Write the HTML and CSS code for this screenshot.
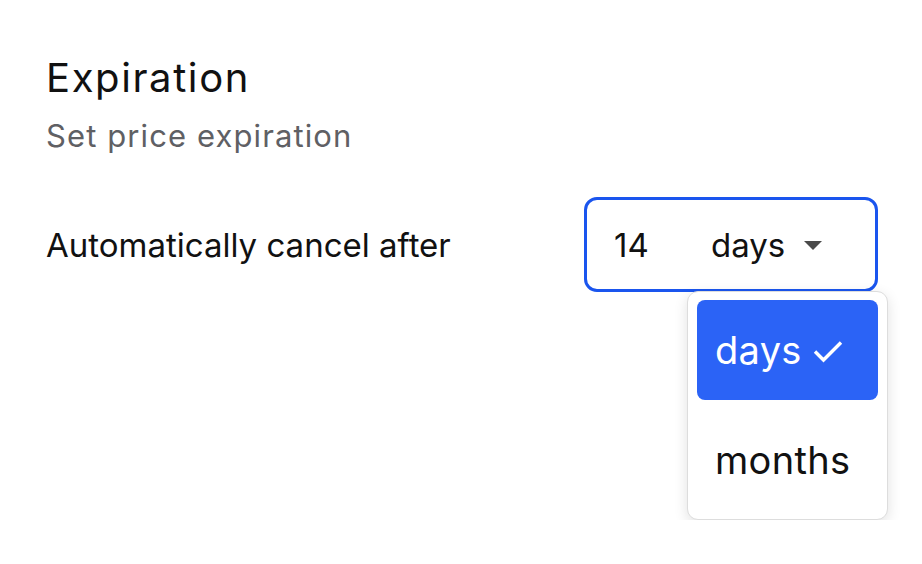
FILE: index.html
```html
<!DOCTYPE html>
<html lang="en">
<head>
    <meta charset="UTF-8">
    <title>Expiration</title>
    <link rel="stylesheet" href="styles.css">
</head>
<body>

<div class="panel">
    <h2 class="title">Expiration</h2>
    <p class="subtitle">Set price expiration</p>

    <div class="row">
        <span class="label">Automatically cancel after</span>
        <div class="field">
            <div class="select">
                <span class="amount">14</span>
                <span class="unit">days</span>
                <svg class="caret" width="18" height="9" viewBox="0 0 18 9"><path d="M0 0h18L9 9z" fill="#4a4a4a"/></svg>
            </div>
            <!-- open dropdown -->
            <ul class="menu">
                <li class="option selected">days
                    <svg class="check" width="32" height="24" viewBox="0 0 32 24"><path d="M3 12.5l8.5 8.5L29 3.5" fill="none" stroke="#fff" stroke-width="3.4"/></svg>
                </li>
                <li class="option">months</li>
            </ul>
        </div>
    </div>
</div>

</body>
</html>
```

FILE: styles.css
```css
body {
    margin: 0;
    background-color: #fff;
    font-family: Inter, "Open Sans", Arial, sans-serif;
    color: #111;
}
.panel {
    padding: 50px 0 0 46px;
}
.title {
    margin: 0;
    font-size: 40px;
    font-weight: 400;
    letter-spacing: 1.6px;
    line-height: 56px;
}
.subtitle {
    margin: 5px 0 0;
    font-size: 31px;
    letter-spacing: 1.1px;
    line-height: 50px;
    color: #5f6064;
}
.row {
    display: flex;
    align-items: flex-start;
    justify-content: space-between;
    width: 832px;
    margin-top: 36px;
}
.label {
    font-size: 33px;
    line-height: 96px;
}
.field {
    display: flex;
    flex-direction: column;
    align-items: flex-end;
}
.select {
    display: flex;
    align-items: center;
    width: 288px;
    height: 89px;
    border: 3px solid #1a55ee;
    border-radius: 13px;
    font-size: 33px;
}
.amount {
    margin-left: 27px;
    width: 97px;
}
.unit {
    width: 93px;
}
.caret {
    margin-top: 2px;
}
.menu {
    width: 181px;
    margin: -1px -10px 0 0;
    padding: 8px 9px 9px;
    list-style: none;
    background-color: #fff;
    border: 1px solid #ddd;
    border-radius: 11px;
    box-shadow: 0 4px 14px rgba(0, 0, 0, 0.12);
}
.option {
    display: flex;
    align-items: center;
    height: 100px;
    padding-left: 18px;
    font-size: 38px;
    letter-spacing: 0.3px;
    border-radius: 8px;
    margin-bottom: 10px;
}
.option:last-child {
    margin-bottom: 0;
}
.selected {
    background-color: #2b63f6;
    color: #fff;
}
.check {
    margin-left: 10px;
    margin-top: 2px;
}
```
